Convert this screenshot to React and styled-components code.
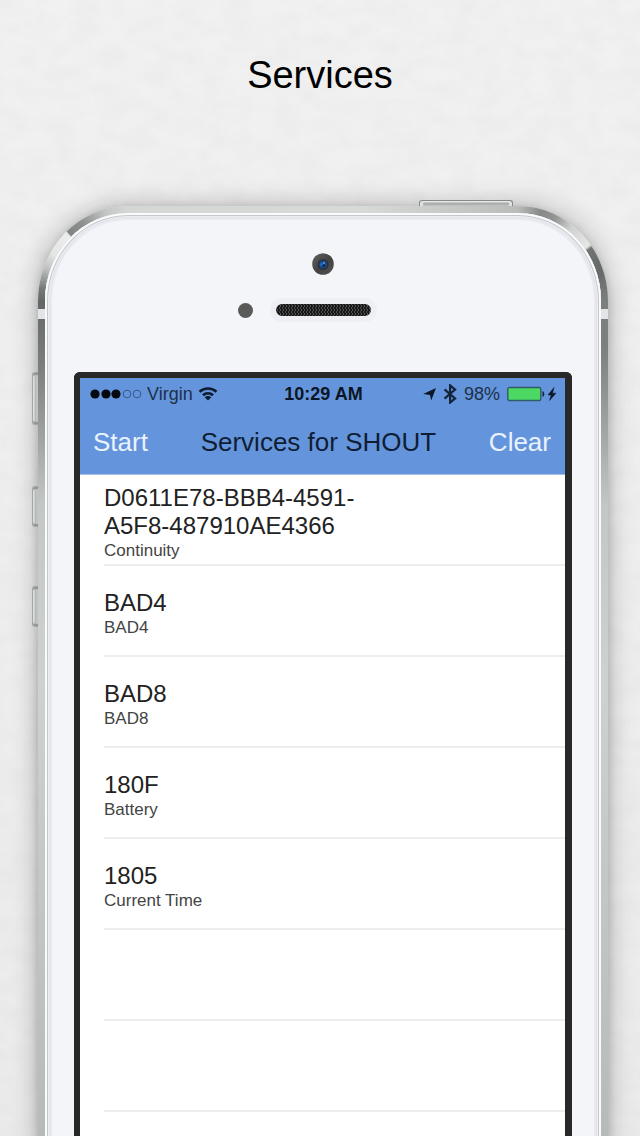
import React from "react";
import styled, { createGlobalStyle } from "styled-components";

const GlobalStyle = createGlobalStyle`
  * { box-sizing: border-box; }
  body { margin: 0; background: #eeeeee; }
`;

const sans = `"Liberation Sans", Arial, Helvetica, sans-serif`;

const Page = styled.main`
  position: relative;
  min-height: 100vh;
  display: flex;
  flex-direction: column;
  overflow: hidden;
  background: linear-gradient(#f1f1f1, #ebebeb);
  font-family: ${sans};
`;

const Paper = styled.svg`
  position: absolute;
  inset: 0;
  width: 100%;
  height: 100%;
`;

const Title = styled.h1`
  position: relative;
  height: 206px;
  margin: 0;
  padding-top: 50px;
  text-align: center;
  font: 400 38px/50px ${sans};
  color: #000;
`;

const Body = styled.section`
  position: relative;
  flex: 1;
  display: flex;
  flex-direction: column;
  margin: 0 32px -20px 38px;
  padding: 7px 7px 0;
  border-radius: 90px 90px 0 0 / 95px 95px 0 0;
  background:
    linear-gradient(#e3e5e8, #e3e5e8) 0 103px / 100% 10px no-repeat,
    conic-gradient(from 270deg at 100% 100%, #646866 0deg, #747876 8deg, #bfc2c0 22deg, #e4e6e4 32deg, #eceeed 48deg, #7f8381 49deg, #8e918f 60deg, #c3c6c4 76deg, #d3d7d5 90deg) 0 0 / 90px 95px no-repeat,
    conic-gradient(from 0deg at 0% 100%, #b9bcba 0deg, #868987 14deg, #929593 24deg, #cfd2d0 36deg, #e6e8e7 52deg, #6f7371 54deg, #656967 70deg, #7b7f7d 90deg) 100% 0 / 90px 95px no-repeat,
    linear-gradient(90deg, #d3d7d5, #d6dad8 60%, #b9bcba) 90px 0 / calc(100% - 180px) 95px no-repeat,
    linear-gradient(#646866 95px, #7b7e7c 160px, #c3c8c5 300px, #cdd2cf 480px, #b5bab7) 0 0 / 50% 100% no-repeat,
    linear-gradient(#7b7f7d 95px, #7b7f7d 140px, #c3c8c5 300px, #cdd2cf 480px, #b5bab7) 100% 0 / 50% 100% no-repeat;
  box-shadow: 0 0 26px rgba(0, 0, 0, 0.28), 0 3px 8px rgba(0, 0, 0, 0.14);
`;

const Rim = styled.div`
  flex: 1;
  display: flex;
  flex-direction: column;
  padding: 7px 7px 0;
  border-radius: 83px 83px 0 0 / 88px 88px 0 0;
  background: #e9e9ef;
  box-shadow: inset 0 0 0 2px #fafbfb, inset 0 0 0 3px #c6c7ce, inset 0 0 0 4px #eeeff3, inset 0 0 0 5px #e2e2e9;
`;

const Glass = styled.div`
  flex: 1;
  display: flex;
  flex-direction: column;
  padding: 33px 22px 0;
  border-radius: 76px 76px 0 0 / 81px 81px 0 0;
  background: #f4f5f8;
`;

const SideKey = styled.span`
  position: absolute;
  left: -6px;
  top: ${(p) => p.$top}px;
  width: 6px;
  height: ${(p) => p.$length}px;
  border: 1px solid #a3a7a5;
  border-right: 0;
  border-radius: 3px 0 0 3px;
  background: linear-gradient(90deg, #eff0f0 0 1px, #aeb2b0 2px, #d2d5d3);
  box-shadow: inset 0 2px 1px #8f9391, inset 0 -2px 1px #8f9391;
`;

const PowerKey = styled.span`
  position: absolute;
  right: 95px;
  top: -6px;
  width: 94px;
  height: 6px;
  border: 1px solid #858987;
  border-bottom: 0;
  border-radius: 3px 3px 0 0;
  background: linear-gradient(#e8eae9 0 1px, #a4a8a6 2px, #b9bdbb);
  box-shadow: inset 3px 0 1px #dfe1e0, inset -3px 0 1px #dfe1e0;
`;

const Camera = styled.svg`
  align-self: center;
  width: 22px;
  height: 22px;
`;

const SensorRow = styled.div`
  display: grid;
  grid-template-columns: 1fr auto 1fr;
  align-items: center;
  column-gap: 17px;
  margin: 23px 0 50px;
`;

const Sensor = styled.span`
  justify-self: end;
  width: 15px;
  height: 15px;
  border-radius: 50%;
  background: #5a5a5a;
`;

const Speaker = styled.span`
  width: 107px;
  height: 24px;
  border: 6px solid #eeeff4;
  border-radius: 12px;
  background:
    radial-gradient(#555 0 1px, transparent 1px) 0 0 / 3px 4px,
    radial-gradient(#4c4c4c 0 1px, transparent 1px) 2px 2px / 3px 4px,
    #171717;
`;

const Screen = styled.div`
  flex: 1;
  display: flex;
  flex-direction: column;
  border: solid #282828;
  border-width: 6px 7px 0 6px;
  border-radius: 6px 6px 0 0;
  background: #fff;
`;

const TopBar = styled.header`
  background: #6495dc;
  border-bottom: 1px solid #a9c0e6;
`;

const StatusBar = styled.div`
  display: grid;
  grid-template-columns: 1fr auto 1fr;
  align-items: center;
  height: 32px;
  padding: 0 8px 0 10px;
  font-size: 18px;
  line-height: 20px;
  color: #1d3049;
`;

const StatusGroup = styled.div`
  display: flex;
  align-items: center;
  justify-content: ${(p) => (p.$end ? "flex-end" : "flex-start")};
  gap: ${(p) => (p.$end ? 7 : 5)}px;
`;

const Clock = styled.time`
  font-weight: 700;
  color: #0b1523;
`;

const Glyph = styled.svg`
  flex: none;
  display: block;
`;

const NavBar = styled.nav`
  display: flex;
  align-items: center;
  justify-content: space-between;
  height: 64px;
  padding: 0 14px 0 13px;
`;

const NavTitle = styled.h2`
  margin: 0;
  font-size: 26px;
  font-weight: 400;
  line-height: 30px;
  color: #0f1e33;
`;

const NavButton = styled.button`
  padding: 0;
  border: 0;
  background: none;
  font: 400 26px/30px ${sans};
  color: #eaf2fd;
`;

const List = styled.ul`
  margin: 0;
  padding: 0 0 0 24px;
  list-style: none;
`;

const Row = styled.li`
  display: flex;
  flex-direction: column;
  justify-content: center;
  height: 91px;
  padding-top: 7px;
  border-bottom: 2px solid #ededed;
`;

const RowTitle = styled.span`
  max-width: 300px;
  font-size: 24px;
  line-height: 28px;
  color: #222;
`;

const RowNote = styled.span`
  font-size: 17px;
  line-height: 22px;
  color: #444;
`;

const services = [
  ["D0611E78-BBB4-4591-A5F8-487910AE4366", "Continuity"],
  ["BAD4", "BAD4"],
  ["BAD8", "BAD8"],
  ["180F", "Battery"],
  ["1805", "Current Time"],
  ["", ""],
  ["", ""],
];

function Signal() {
  return (
    <Glyph width="52" height="12" viewBox="0 0 52 12" role="img" aria-label="Signal">
      {[5, 16, 26].map((x) => (
        <circle key={x} cx={x} cy="6" r="4.6" fill="#05090f" />
      ))}
      {[37, 47].map((x) => (
        <circle key={x} cx={x} cy="6" r="3.8" fill="none" stroke="#35568a" />
      ))}
    </Glyph>
  );
}

function Wifi() {
  return (
    <Glyph width="20" height="14" viewBox="0 0 20 14" role="img" aria-label="Wi-Fi">
      <g fill="none" stroke="#0e1c30" strokeWidth="2.6">
        <path d="M1.500 4.8C6.2.4 13.8.4 18.5 4.8" />
        <path d="M5 8.2c2.8-2.6 7.2-2.6 10 0" />
      </g>
      <path d="M10 13.6 6.7 10.3c1.8-1.7 4.8-1.7 6.6 0z" fill="#0e1c30" />
    </Glyph>
  );
}

function Location() {
  return (
    <Glyph width="13" height="13" viewBox="0 0 13 13" role="img" aria-label="Location">
      <path d="M13 0 8.2 12.600 7 7 .2 6z" fill="#0b1728" />
    </Glyph>
  );
}

function Bluetooth() {
  return (
    <Glyph width="14" height="20" viewBox="0 0 14 20" role="img" aria-label="Bluetooth">
      <path d="m1.500 5.4 10.600 9-5 4.200V1.400l5 4.200-10.600 9" fill="none" stroke="#14243a" strokeWidth="2.2" />
    </Glyph>
  );
}

function Battery() {
  return (
    <Glyph width="50" height="16" viewBox="0 0 50 16" role="img" aria-label="Charging">
      <rect x=".8" y="1.500" width="33" height="13" rx="1.500" fill="#4bd964" stroke="#315b68" strokeWidth="1.400" />
      <path d="M35.500 5c2.400.8 2.400 5.200 0 6z" fill="#14243a" />
      <path d="m47 1.500-6 7.500h3.200l-1.700 5.500 6.500-7.300h-3.500z" fill="#0b1728" stroke="#0b1728" strokeWidth=".5" />
    </Glyph>
  );
}

export default function App() {
  return (
    <>
      <GlobalStyle />
      <Page>
        <Paper aria-hidden="true">
          <filter id="paper">
            <feTurbulence type="fractalNoise" baseFrequency="0.04 0.06" numOctaves="4" seed="4" />
            <feColorMatrix values="0 0 0 0 0.5  0 0 0 0 0.5  0 0 0 0 0.5  0.16 0 0 0 -0.050" />
          </filter>
          <rect width="100%" height="100%" filter="url(#paper)" />
        </Paper>
        <Title>Services</Title>
        <Body>
          <PowerKey />
          <SideKey $top={166} $length={53} />
          <SideKey $top={280} $length={41} />
          <SideKey $top={380} $length={41} />
          <Rim>
            <Glass>
              <Camera viewBox="0 0 22 22" aria-hidden="true">
                <defs>
                  <linearGradient id="barrel" x1="0" y1="0" x2="1" y2="1">
                    <stop offset="0" stopColor="#626262" />
                    <stop offset=".55" stopColor="#424242" />
                    <stop offset="1" stopColor="#555" />
                  </linearGradient>
                </defs>
                <circle cx="11" cy="11" r="10.8" fill="url(#barrel)" />
                <circle cx="11" cy="11.500" r="5.500" fill="#303236" />
                <circle cx="11" cy="11.500" r="3.900" fill="#154a8c" />
                <circle cx="9.600" cy="11.500" r="1.800" fill="#1f67b5" />
                <circle cx="12" cy="10" r="1" fill="#5c9bdd" />
                <circle cx="11.800" cy="12.600" r="1.200" fill="#0a1b36" />
              </Camera>
              <SensorRow>
                <Sensor />
                <Speaker />
              </SensorRow>
              <Screen>
                <TopBar>
                  <StatusBar>
                    <StatusGroup>
                      <Signal />
                      <span>Virgin</span>
                      <Wifi />
                    </StatusGroup>
                    <Clock>10:29 AM</Clock>
                    <StatusGroup $end>
                      <Location />
                      <Bluetooth />
                      <span>98%</span>
                      <Battery />
                    </StatusGroup>
                  </StatusBar>
                  <NavBar>
                    <NavButton type="button">Start</NavButton>
                    <NavTitle>Services for SHOUT</NavTitle>
                    <NavButton type="button">Clear</NavButton>
                  </NavBar>
                </TopBar>
                <List>
                  {services.map(([title, note], i) => (
                    <Row key={i}>
                      {title && <RowTitle>{title}</RowTitle>}
                      {note && <RowNote>{note}</RowNote>}
                    </Row>
                  ))}
                </List>
              </Screen>
            </Glass>
          </Rim>
        </Body>
      </Page>
    </>
  );
}
